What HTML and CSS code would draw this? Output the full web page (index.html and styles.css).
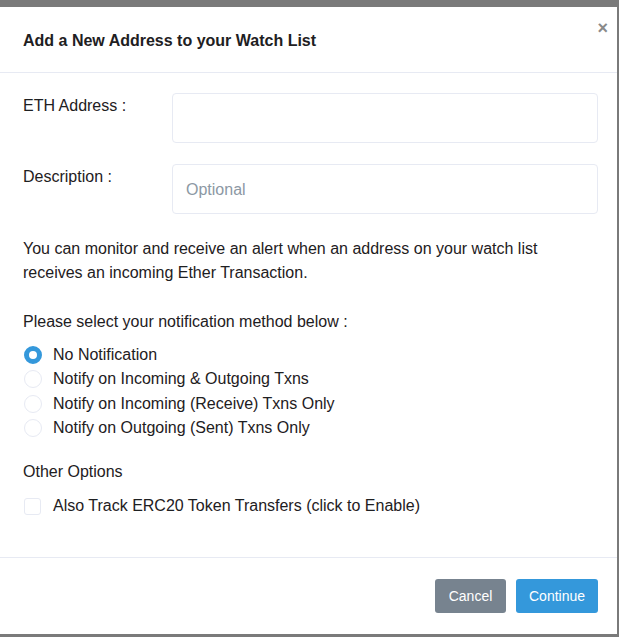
FILE: index.html
```html
<!DOCTYPE html>
<html>
<head>
<meta charset="utf-8">
<link rel="stylesheet" href="styles.css">
</head>
<body>
<div class="modal">
  <div class="modal-header">
    <h5 class="modal-title">Add a New Address to your Watch List</h5>
    <span class="close">×</span>
  </div>
  <div class="modal-body">
    <div class="form-row">
      <label class="form-label">ETH Address :</label>
      <div class="form-input"></div>
    </div>
    <div class="form-row last">
      <label class="form-label">Description :</label>
      <div class="form-input"><span class="placeholder">Optional</span></div>
    </div>
    <p class="info">You can monitor and receive an alert when an address on your watch list receives an incoming Ether Transaction.</p>
    <p class="select-title">Please select your notification method below :</p>
    <div class="radio-list">
      <div class="radio-item"><span class="radio checked"></span>No Notification</div>
      <div class="radio-item"><span class="radio"></span>Notify on Incoming &amp; Outgoing Txns</div>
      <div class="radio-item"><span class="radio"></span>Notify on Incoming (Receive) Txns Only</div>
      <div class="radio-item"><span class="radio"></span>Notify on Outgoing (Sent) Txns Only</div>
    </div>
    <p class="other-title">Other Options</p>
    <div class="check-item"><span class="checkbox"></span>Also Track ERC20 Token Transfers (click to Enable)</div>
  </div>
  <div class="modal-footer">
    <button class="btn btn-secondary">Cancel</button>
    <button class="btn btn-primary">Continue</button>
  </div>
</div>
</body>
</html>
```
FILE: styles.css
```css
html, body {
  margin: 0;
  padding: 0;
}
body {
  background: #7a7a7a;
  font-family: "Liberation Sans", Arial, sans-serif;
  font-size: 16px;
  line-height: 24px;
  color: #1e2022;
  height: 637px;
  overflow: hidden;
}
.modal {
  margin-top: 7px;
  width: 617px;
  height: 627px;
  background: #fff;
  display: flex;
  flex-direction: column;
}
.modal-header {
  display: flex;
  justify-content: space-between;
  align-items: flex-start;
  padding: 22px 9px 19px 23px;
  border-bottom: 1px solid #e7eaf3;
}
.modal-title {
  margin: 0;
  font-size: 16px;
  line-height: 24px;
  font-weight: bold;
  color: #1e2022;
}
.close {
  font-size: 18px;
  font-weight: bold;
  line-height: 1;
  color: #8a8a8a;
  margin-top: -10px;
}
.modal-body {
  padding: 20px 19px 0 23px;
  flex: 1;
}
.form-row {
  display: flex;
  margin-bottom: 21px;
}
.form-row.last {
  margin-bottom: 22px;
}
.form-label {
  width: 149px;
  flex: none;
  padding-top: 1px;
}
.form-input {
  flex: 1;
  height: 48px;
  border: 1px solid #e7eaf3;
  border-radius: 4px;
  display: flex;
  align-items: center;
  padding: 0 13px;
}
.placeholder {
  color: #8c98a4;
  padding-top: 2px;
}
.info {
  margin: 0 0 25px;
  padding-top: 1px;
}
.select-title {
  margin: 0 0 9px;
}
.radio-list {
  display: flex;
  flex-direction: column;
}
.radio-item, .check-item {
  display: flex;
  align-items: center;
  height: 24.3px;
}
.radio {
  width: 16px;
  height: 16px;
  border: 1px solid #e7eaf3;
  border-radius: 50%;
  margin: 0 11px 0 1px;
  box-sizing: content-box;
  background: #fff;
  flex: none;
}
.radio.checked {
  width: 8px;
  height: 8px;
  border: 5px solid #3498db;
  background: #fff;
}
.other-title {
  margin: 20px 0 10px;
}
.checkbox {
  width: 15px;
  height: 15px;
  border: 1px solid #e7eaf3;
  border-radius: 3px;
  margin: 0 12px 0 1px;
  flex: none;
}
.modal-footer {
  display: flex;
  justify-content: flex-end;
  gap: 10px;
  padding: 21px 19px 21px;
  border-top: 1px solid #e7eaf3;
}
.btn {
  font-family: "Liberation Sans", Arial, sans-serif;
  font-size: 14px;
  height: 34px;
  border: none;
  border-radius: 3px;
  color: #fff;
  padding: 0 13px;
}
.btn-secondary {
  background: #77838f;
  width: 71px;
}
.btn-primary {
  background: #3498db;
  width: 82px;
}
```
